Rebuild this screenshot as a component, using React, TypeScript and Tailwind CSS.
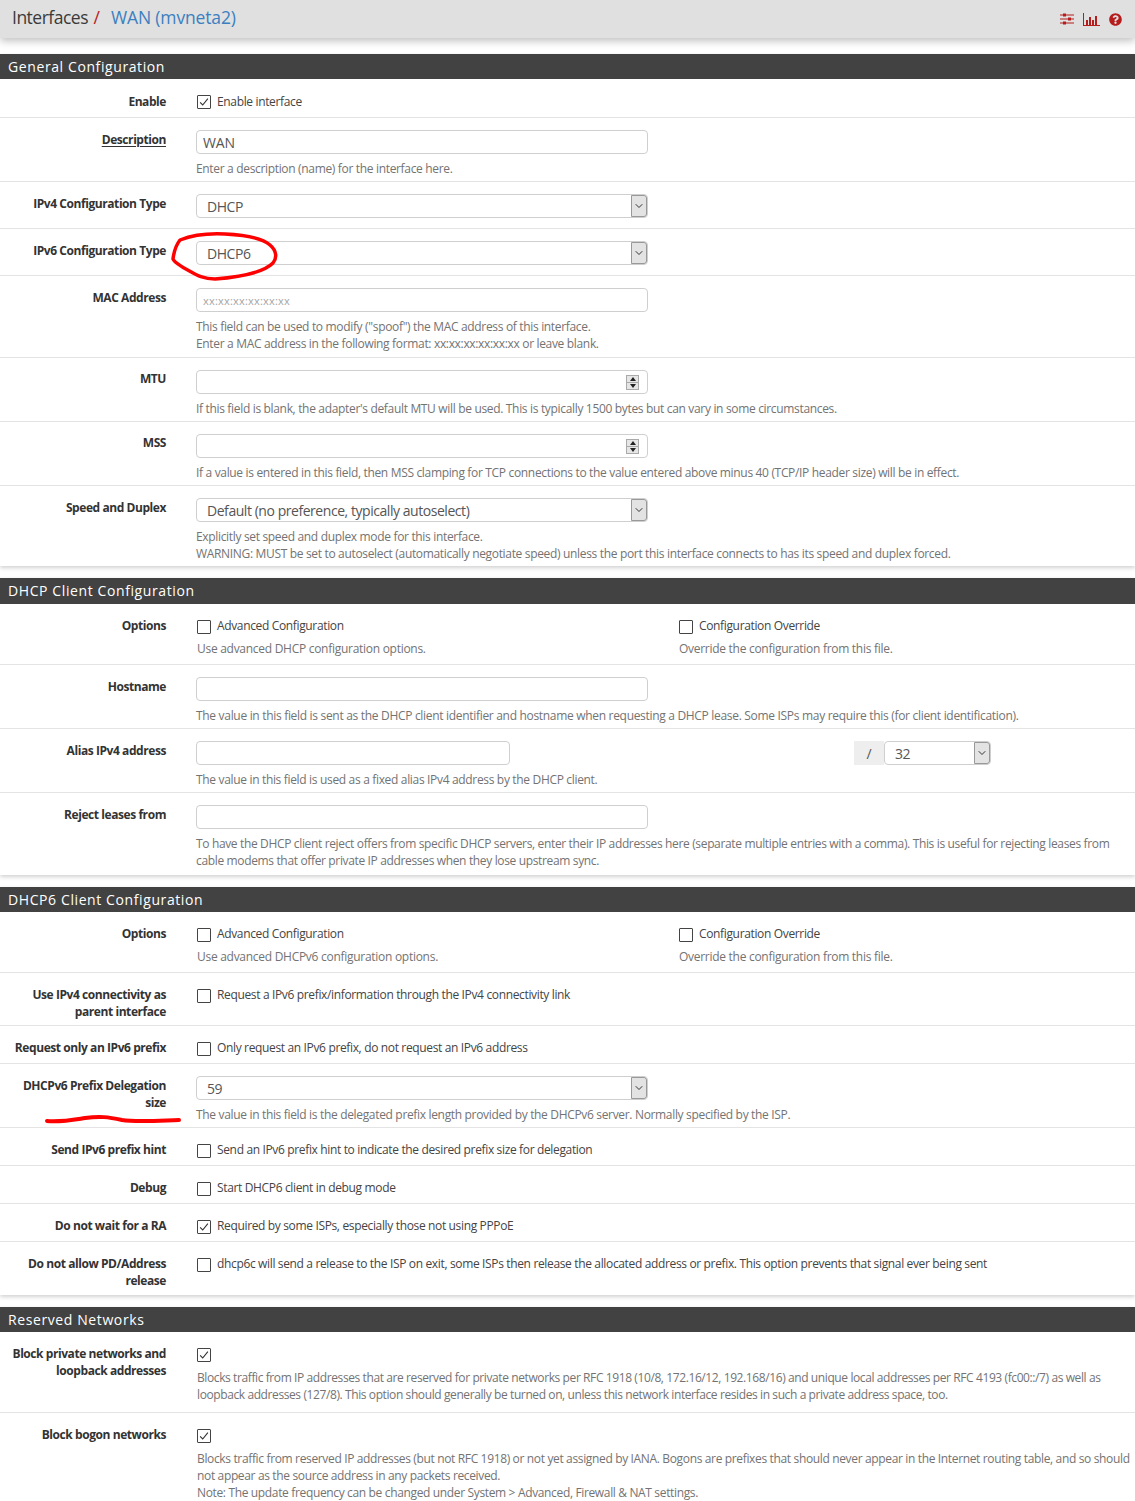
import React from "react";
import { ChevronDown } from "lucide-react";
import { FaQuestionCircle } from "react-icons/fa";

function Help({ children, tracking = "tracking-[-0.33px]" }: { children: React.ReactNode; tracking?: string }) {
  return <div className={`mt-[6px] text-[12px] leading-[17px] text-[#737373] whitespace-pre-line ${tracking}`}>{children}</div>;
}

function Row({ label, height, children, top = "pt-3", labelTop = "pt-[13px]" }: { label: React.ReactNode; height: string; children: React.ReactNode; top?: string; labelTop?: string }) {
  return (
    <div className={`flex border-b border-[#e4e4e4] ${height}`}>
      <div className={`w-[166px] shrink-0 text-right text-[12px] leading-[17px] font-bold tracking-[-0.43px] text-[#333] ${labelTop}`}>{label}</div>
      <div className={`ml-[30px] min-w-0 flex-1 ${top}`}>{children}</div>
    </div>
  );
}

function TextInput({ value, placeholder, width = "w-[452px]" }: { value?: string; placeholder?: string; width?: string }) {
  return (
    <div className={`flex h-6 items-center rounded-[4px] border border-[#cfcfcf] bg-white pl-[6px] text-[14px] text-[#555] tracking-[-0.2px] ${width}`}>
      {value}
      {placeholder && <span className="pt-[2px] text-[11px] tracking-[0.2px] text-[#a5a5a5]">{placeholder}</span>}
    </div>
  );
}

function NumberInput() {
  return (
    <div className="flex h-6 w-[452px] items-center justify-end rounded-[4px] border border-[#cfcfcf] bg-white pr-2">
      <div className="flex h-[15px] w-[13px] flex-col border border-[#aaa] bg-[#e6e6e6]">
        <span className="flex h-[7px] items-center justify-center border-b border-[#aaa]">
          <span className="h-0 w-0 border-x-[3px] border-b-[4px] border-x-transparent border-b-[#222]" />
        </span>
        <span className="flex h-[6px] items-center justify-center">
          <span className="h-0 w-0 border-x-[3px] border-t-[4px] border-x-transparent border-t-[#222]" />
        </span>
      </div>
    </div>
  );
}

function SelectInput({ value, width = "w-[452px]" }: { value: string; width?: string }) {
  return (
    <div className={`flex h-6 items-center rounded-[4px] border border-[#cfcfcf] bg-white text-[14px] text-[#555] tracking-[-0.45px] ${width}`}>
      <span className="flex-1 pl-[10px]">{value}</span>
      <span className="flex h-[22px] w-[16px] items-center justify-center rounded-r-[3px] border border-[#999] bg-[#e3e3e3]">
        <ChevronDown size={12} strokeWidth={2} className="text-[#333]" />
      </span>
    </div>
  );
}

function Check({ checked, label, box = "translate-y-px" }: { checked?: boolean; label?: string; box?: string }) {
  return (
    <div className="flex h-[17px] items-center text-[12px] leading-[17px] tracking-[-0.35px] text-[#444]">
      <span className={`ml-px flex h-[14px] w-[14px] shrink-0 items-center justify-center rounded-[1px] border border-[#444] bg-white ${box}`}>
        {checked && (
          <svg viewBox="0 0 14 14" className="h-3 w-3" fill="none" stroke="#333" strokeWidth="1.3">
            <path d="M2.5 7.5l3 3 6-7.5" />
          </svg>
        )}
      </span>
      {label && <span className="ml-[6px] whitespace-nowrap">{label}</span>}
    </div>
  );
}

function TwoChecks({ help }: { help: string }) {
  return (
    <div className="flex">
      <div className="w-[482px]">
        <Check label="Advanced Configuration" />
        <div className="pl-px"><Help tracking="tracking-[-0.28px]">{help}</Help></div>
      </div>
      <div>
        <Check label="Configuration Override" />
        <div className="pl-px"><Help tracking="tracking-[-0.28px]">Override the configuration from this file.</Help></div>
      </div>
    </div>
  );
}

function Section({ title, bar = "h-[25px]", children }: { title: string; bar?: string; children: React.ReactNode }) {
  return (
    <section className="mb-3 bg-white shadow-[0_2px_4px_rgba(0,0,0,0.18)]">
      <h2 className={`${bar} bg-[#424242] pl-2 text-[14px] leading-[26px] font-normal tracking-[0.6px] text-white`}>{title}</h2>
      {children}
    </section>
  );
}

export default function App() {
  return (
    <div className="relative h-[1501px] w-full overflow-hidden bg-white font-['Open_Sans','Noto_Sans',sans-serif]">
      <header className="mb-4 flex h-[38px] items-center justify-between bg-[#e0e0e0] pl-3 pr-[13px] shadow-[0_3px_8px_rgba(0,0,0,0.25)]">
        <div className="pb-[3px] text-[17.5px] text-[#3a3a3a]">
          <span className="tracking-[-0.5px]">Interfaces</span> <span className="ml-px text-[#b71c1c]">/</span>
          <span className="ml-[11px] tracking-[-0.15px] text-[#3b7fc0]">WAN (mvneta2)</span>
        </div>
        <div className="flex items-center gap-[9px] text-[#b71c1c]">
          <svg viewBox="0 0 14 12" className="h-3 w-[14px]" stroke="currentColor" fill="currentColor">
            <path d="M0 2h14M0 6h14M0 10h14" strokeWidth="1" />
            <path d="M3 .5h3v3H3zM8 4.5h3v3H8zM3 8.5h3v3H3z" strokeWidth="0" />
          </svg>
          <svg viewBox="0 0 17 13" className="h-[13px] w-[17px]" fill="currentColor">
            <path d="M0 0h1v12h16v1H0z" />
            <path d="M3 7h2v5H3zM6 4h2v8H6zM9 7h2v5H9zM12 3h2v9h-2z" />
          </svg>
          <FaQuestionCircle size={13} />
        </div>
      </header>

      <Section title="General Configuration">
        <Row label="Enable" height="h-[39px]" top="pt-[14px]" labelTop="pt-[14px]"><Check checked box="" label="Enable interface" /></Row>
        <Row label={<span className="underline underline-offset-2">Description</span>} height="h-[64px]">
          <TextInput value="WAN" />
          <Help>Enter a description (name) for the interface here.</Help>
        </Row>
        <Row label="IPv4 Configuration Type" height="h-[47px]"><SelectInput value="DHCP" /></Row>
        <Row label="IPv6 Configuration Type" height="h-[47px]"><SelectInput value="DHCP6" /></Row>
        <Row label="MAC Address" height="h-[82px]">
          <TextInput placeholder="xx:xx:xx:xx:xx:xx" />
          <Help>{"This field can be used to modify (\"spoof\") the MAC address of this interface.\nEnter a MAC address in the following format: xx:xx:xx:xx:xx:xx or leave blank."}</Help>
        </Row>
        <Row label="MTU" height="h-[64px]" labelTop="pt-3">
          <NumberInput />
          <Help>If this field is blank, the adapter's default MTU will be used. This is typically 1500 bytes but can vary in some circumstances.</Help>
        </Row>
        <Row label="MSS" height="h-[64px]" labelTop="pt-3">
          <NumberInput />
          <Help>If a value is entered in this field, then MSS clamping for TCP connections to the value entered above minus 40 (TCP/IP header size) will be in effect.</Help>
        </Row>
        <Row label="Speed and Duplex" height="h-[80px] border-b-0">
          <SelectInput value="Default (no preference, typically autoselect)" />
          <Help>{"Explicitly set speed and duplex mode for this interface.\nWARNING: MUST be set to autoselect (automatically negotiate speed) unless the port this interface connects to has its speed and duplex forced."}</Help>
        </Row>
      </Section>

      <Section title="DHCP Client Configuration" bar="h-[26px]">
        <Row label="Options" height="h-[61px]" top="pt-[13px]"><TwoChecks help="Use advanced DHCP configuration options." /></Row>
        <Row label="Hostname" height="h-[64px]">
          <TextInput />
          <Help tracking="tracking-[-0.31px]">The value in this field is sent as the DHCP client identifier and hostname when requesting a DHCP lease. Some ISPs may require this (for client identification).</Help>
        </Row>
        <Row label="Alias IPv4 address" height="h-[64px]">
          <div className="flex">
            <TextInput width="w-[314px]" />
            <div className="ml-[344px] flex">
              <span className="flex h-6 w-[30px] items-center justify-center bg-[#eee] text-[14px] text-[#555]">/</span>
              <SelectInput value="32" width="w-[107px]" />
            </div>
          </div>
          <Help>The value in this field is used as a fixed alias IPv4 address by the DHCP client.</Help>
        </Row>
        <Row label="Reject leases from" height="h-[82px] border-b-0">
          <TextInput />
          <Help tracking="tracking-[-0.35px]">{"To have the DHCP client reject offers from specific DHCP servers, enter their IP addresses here (separate multiple entries with a comma). This is useful for rejecting leases from\ncable modems that offer private IP addresses when they lose upstream sync."}</Help>
        </Row>
      </Section>

      <Section title="DHCP6 Client Configuration">
        <Row label="Options" height="h-[61px]" top="pt-[13px]"><TwoChecks help="Use advanced DHCPv6 configuration options." /></Row>
        <Row label={<>Use IPv4 connectivity as<br />parent interface</>} height="h-[53px]" top="pt-[13px]">
          <Check label="Request a IPv6 prefix/information through the IPv4 connectivity link" />
        </Row>
        <Row label="Request only an IPv6 prefix" height="h-[38px]" top="pt-[13px]">
          <Check label="Only request an IPv6 prefix, do not request an IPv6 address" />
        </Row>
        <Row label={<>DHCPv6 Prefix Delegation<br />size</>} height="h-[64px]">
          <SelectInput value="59" />
          <Help>The value in this field is the delegated prefix length provided by the DHCPv6 server. Normally specified by the ISP.</Help>
        </Row>
        <Row label="Send IPv6 prefix hint" height="h-[38px]" top="pt-[13px]">
          <Check label="Send an IPv6 prefix hint to indicate the desired prefix size for delegation" />
        </Row>
        <Row label="Debug" height="h-[38px]" top="pt-[13px]"><Check label="Start DHCP6 client in debug mode" /></Row>
        <Row label="Do not wait for a RA" height="h-[38px]" top="pt-[13px]">
          <Check checked label="Required by some ISPs, especially those not using PPPoE" />
        </Row>
        <Row label={<>Do not allow PD/Address<br />release</>} height="h-[53px] border-b-0" top="pt-[13px]">
          <Check label="dhcp6c will send a release to the ISP on exit, some ISPs then release the allocated address or prefix. This option prevents that signal ever being sent" />
        </Row>
      </Section>

      <Section title="Reserved Networks">
        <Row label={<>Block private networks and<br />loopback addresses</>} height="h-[81px]" top="pt-[14px]">
          <Check checked box="" />
          <div className="pl-px">
            <Help tracking="tracking-[-0.4px]">{"Blocks traffic from IP addresses that are reserved for private networks per RFC 1918 (10/8, 172.16/12, 192.168/16) and unique local addresses per RFC 4193 (fc00::/7) as well as\nloopback addresses (127/8). This option should generally be turned on, unless this network interface resides in such a private address space, too."}</Help>
          </div>
        </Row>
        <Row label="Block bogon networks" height="h-[88px] border-b-0" top="pt-[14px]">
          <Check checked box="" />
          <div className="pl-px">
            <Help tracking="tracking-[-0.35px]">{"Blocks traffic from reserved IP addresses (but not RFC 1918) or not yet assigned by IANA. Bogons are prefixes that should never appear in the Internet routing table, and so should\nnot appear as the source address in any packets received.\nNote: The update frequency can be changed under System > Advanced, Firewall & NAT settings."}</Help>
          </div>
        </Row>
      </Section>

      {/* red marker scribbles drawn over the screenshot */}
      <svg className="pointer-events-none absolute left-0 top-0 h-[1501px] w-[1135px]" viewBox="0 0 1135 1501" fill="none" stroke="#f00" strokeLinecap="round" strokeLinejoin="round">
        <path d="M180 240C190 236 205 233 225 234C245 235 262 238 270 245C277 251 277 258 273 263C264 272 240 277 215 279C200 279 194 273 184 268C178 264 174 262 173 259C174 251 176 245 180 240Z" strokeWidth="3.5" />
        <path d="M47 1121C62 1122 72 1120 85 1118C100 1116 108 1117 122 1120C135 1122 150 1121 179 1120" strokeWidth="4" />
      </svg>
    </div>
  );
}
